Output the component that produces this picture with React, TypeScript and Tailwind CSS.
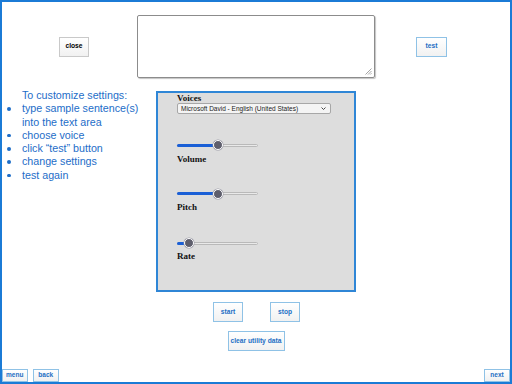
import { useState } from 'react';

function Slider({ value }: { value: number }) {
  // value 0..1, thumb position along the 81px track
  const left = 4.5 + value * 72;
  return (
    <div className="relative w-[81px] h-[10px]">
      <div className="absolute left-0 right-0 top-[3.5px] h-[3px] rounded-full bg-[#e9e9e9] border border-[#b9b9b9]" />
      <div className="absolute left-0 top-[3.5px] h-[3px] rounded-full bg-[#1a5fd6]" style={{ width: left }} />
      <div
        className="absolute top-0 w-[10px] h-[10px] rounded-full bg-[#5e5e6c] border-[1.5px] border-white shadow-[0_0_0_0.5px_#9a9aa6]"
        style={{ left: left - 5 }}
      />
    </div>
  );
}

export default function App() {
  const [text, setText] = useState('');
  const btn = 'flex items-center justify-center bg-gradient-to-b from-white to-[#f1f1f1] font-bold font-["Liberation_Sans",Arial,sans-serif]';

  return (
    <div className="w-[512px] h-[384px] border-2 border-[#1b7bd6] bg-white flex flex-col overflow-hidden">
      {/* top row */}
      <div className="flex items-center pt-[13px] pl-[57px]">
        <button className={`${btn} w-[30px] h-[20px] border border-[#c9c9c9] text-[6.7px] text-black`}>close</button>
        <div className="relative ml-[48px]">
          <textarea
            value={text}
            onChange={(e) => setText(e.target.value)}
            className="block w-[238px] h-[63px] rounded-[2px] border-[1.5px] border-[#8c8c8c] shadow-[1px_1px_1px_#c4c4c4] resize-none outline-none"
          />
          <svg className="absolute right-[3px] bottom-[3px]" width="7" height="7" viewBox="0 0 7 7">
            <path d="M6.5 0.5 L0.5 6.5 M6.5 3 L3 6.5 M6.5 5.2 L5.2 6.5" stroke="#9a9a9a" strokeWidth="0.9" />
          </svg>
        </div>
        <button className={`${btn} ml-[41px] w-[31px] h-[20px] border border-[#8fc2e6] text-[6.7px] text-[#1d6fc4]`}>test</button>
      </div>

      {/* middle */}
      <div className="flex mt-[11px]">
        <div className="w-[154px] text-[10.7px] leading-[13.3px] text-[#1d6dc8] font-['Liberation_Sans',Arial,sans-serif]">
          <p className="pl-[20px]">To customize settings:</p>
          <ul>
            {[
              ['type sample sentence(s)', 'into the text area'],
              ['choose voice'],
              ['click \u201ctest\u201d button'],
              ['change settings'],
              ['test again'],
            ].map((lines, i) => (
              <li key={i} className="flex">
                <span className="w-[20px] shrink-0 flex justify-start pl-[5px] pt-[5px]">
                  <span className="w-[3.5px] h-[3.5px] rounded-full bg-[#1d6dc8]" />
                </span>
                <span>
                  {lines.map((l) => (
                    <span key={l} className="block">{l}</span>
                  ))}
                </span>
              </li>
            ))}
          </ul>
        </div>

        <div className="mt-[2px] w-[200px] h-[201px] bg-[#dddddd] border-2 border-[#2f86d6] pl-[19px] pt-0 font-['Liberation_Serif','Times_New_Roman',serif] text-[9px] leading-[10px] font-bold text-[#111]">
          <div>Voices</div>
          <div className="relative w-[154px]">
            <select className="appearance-none block w-full h-[11px] rounded-[2px] border border-[#a7a7a7] bg-[#f4f4f4] pl-[3px] text-[6.5px] leading-[9px] font-normal text-[#222] font-['Liberation_Sans',Arial,sans-serif] outline-none">
              <option>Microsoft David - English (United States)</option>
            </select>
            <svg className="absolute right-[5px] top-[4px]" width="5" height="3" viewBox="0 0 5 3">
              <path d="M0.5 0.5 L2.5 2.5 L4.5 0.5" fill="none" stroke="#333" strokeWidth="0.9" />
            </svg>
          </div>
          <div className="mt-[26px]"><Slider value={0.5} /></div>
          <div className="mt-[3.5px]">Volume</div>
          <div className="mt-[25px]"><Slider value={0.5} /></div>
          <div className="mt-[3.5px]">Pitch</div>
          <div className="mt-[26px]"><Slider value={0.1} /></div>
          <div className="mt-[3px]">Rate</div>
        </div>
      </div>

      {/* controls */}
      <div className="flex justify-center gap-[27px] mt-[10px] pl-[1px]">
        <button className={`${btn} w-[30px] h-[20px] border border-[#8fc2e6] text-[6.7px] text-[#1d6fc4]`}>start</button>
        <button className={`${btn} w-[30px] h-[20px] border border-[#8fc2e6] text-[6.7px] text-[#1d6fc4]`}>stop</button>
      </div>
      <div className="flex justify-center mt-[9px]">
        <button className={`${btn} w-[57px] h-[20px] border border-[#8fc2e6] text-[6.7px] text-[#1d6fc4]`}>clear utility data</button>
      </div>

      {/* bottom nav */}
      <div className="mt-auto flex items-end mb-[0.5px]">
        <button className={`${btn} w-[25.5px] h-[12.5px] border border-[#8fc2e6] text-[6.5px] text-[#1d6fc4]`}>menu</button>
        <button className={`${btn} ml-[5.5px] w-[25.5px] h-[12.5px] border border-[#8fc2e6] text-[6.5px] text-[#1d6fc4]`}>back</button>
        <button className={`${btn} ml-auto w-[26px] h-[12.5px] border border-[#8fc2e6] text-[6.5px] text-[#1d6fc4]`}>next</button>
      </div>
    </div>
  );
}
